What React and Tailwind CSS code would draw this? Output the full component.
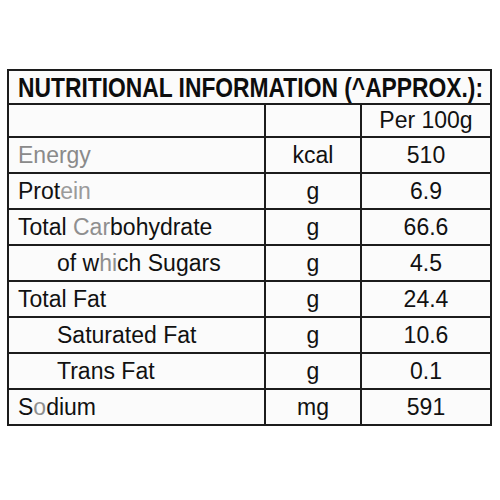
const rows = [
  { label: [["Energy", "text-[#8a8a8a]"]], unit: "kcal", value: "510" },
  { label: [["Prot", ""], ["ein", "text-[#9a9a9a]"]], unit: "g", value: "6.9" },
  {
    label: [["Total ", ""], ["Car", "text-[#8f8f8f]"], ["bohydrate", ""]],
    unit: "g",
    value: "66.6",
  },
  {
    label: [["of w", ""], ["hi", "text-[#8f8f8f]"], ["ch Sugars", ""]],
    unit: "g",
    value: "4.5",
    indent: true,
  },
  { label: [["Total Fat", ""]], unit: "g", value: "24.4" },
  { label: [["Saturated Fat", ""]], unit: "g", value: "10.6", indent: true },
  { label: [["Trans Fat", ""]], unit: "g", value: "0.1", indent: true },
  { label: [["S", ""], ["o", "text-[#8f8f8f]"], ["dium", ""]], unit: "mg", value: "591" },
];

function Row({ label, unit, value, indent }) {
  return (
    <div className="grid grid-cols-[255px_96px_130px] h-[36px] border-t-2 border-[#1c1c1c]">
      <div
        className={`flex items-center ${indent ? "pl-[48px]" : "pl-[9px]"} pt-[1px]`}
      >
        <span className="whitespace-pre">
          {label.map(([text, cls], i) => (
            <span key={i} className={cls}>
              {text}
            </span>
          ))}
        </span>
      </div>
      <div className="flex items-center justify-center border-l-2 border-[#1c1c1c] pt-[1px]">
        {unit}
      </div>
      <div className="flex items-center justify-center border-l-2 border-[#1c1c1c] pt-[1px]">
        {value}
      </div>
    </div>
  );
}

export default function App() {
  return (
    <div className="w-[500px] h-[500px] bg-white pt-[69px] pl-[7px]">
      <div className="w-[485px] border-2 border-[#1c1c1c] bg-[#fbfbfb] text-[#111] text-[23px] leading-none font-['Liberation_Sans',Arial,sans-serif]">
        <div className="h-[32px] flex items-center pl-[9px] pt-[1px] overflow-hidden">
          <span className="inline-block origin-left scale-x-[0.815] font-bold text-[28px] text-[#0d0d0d] whitespace-nowrap">
            NUTRITIONAL INFORMATION (^APPROX.):
          </span>
        </div>
        <div className="grid grid-cols-[255px_96px_130px] h-[33px] border-t-2 border-[#1c1c1c]">
          <div></div>
          <div className="border-l-2 border-[#1c1c1c]"></div>
          <div className="flex items-center justify-center border-l-2 border-[#1c1c1c]">
            Per 100g
          </div>
        </div>
        {rows.map((r, i) => (
          <Row key={i} {...r} />
        ))}
      </div>
    </div>
  );
}
